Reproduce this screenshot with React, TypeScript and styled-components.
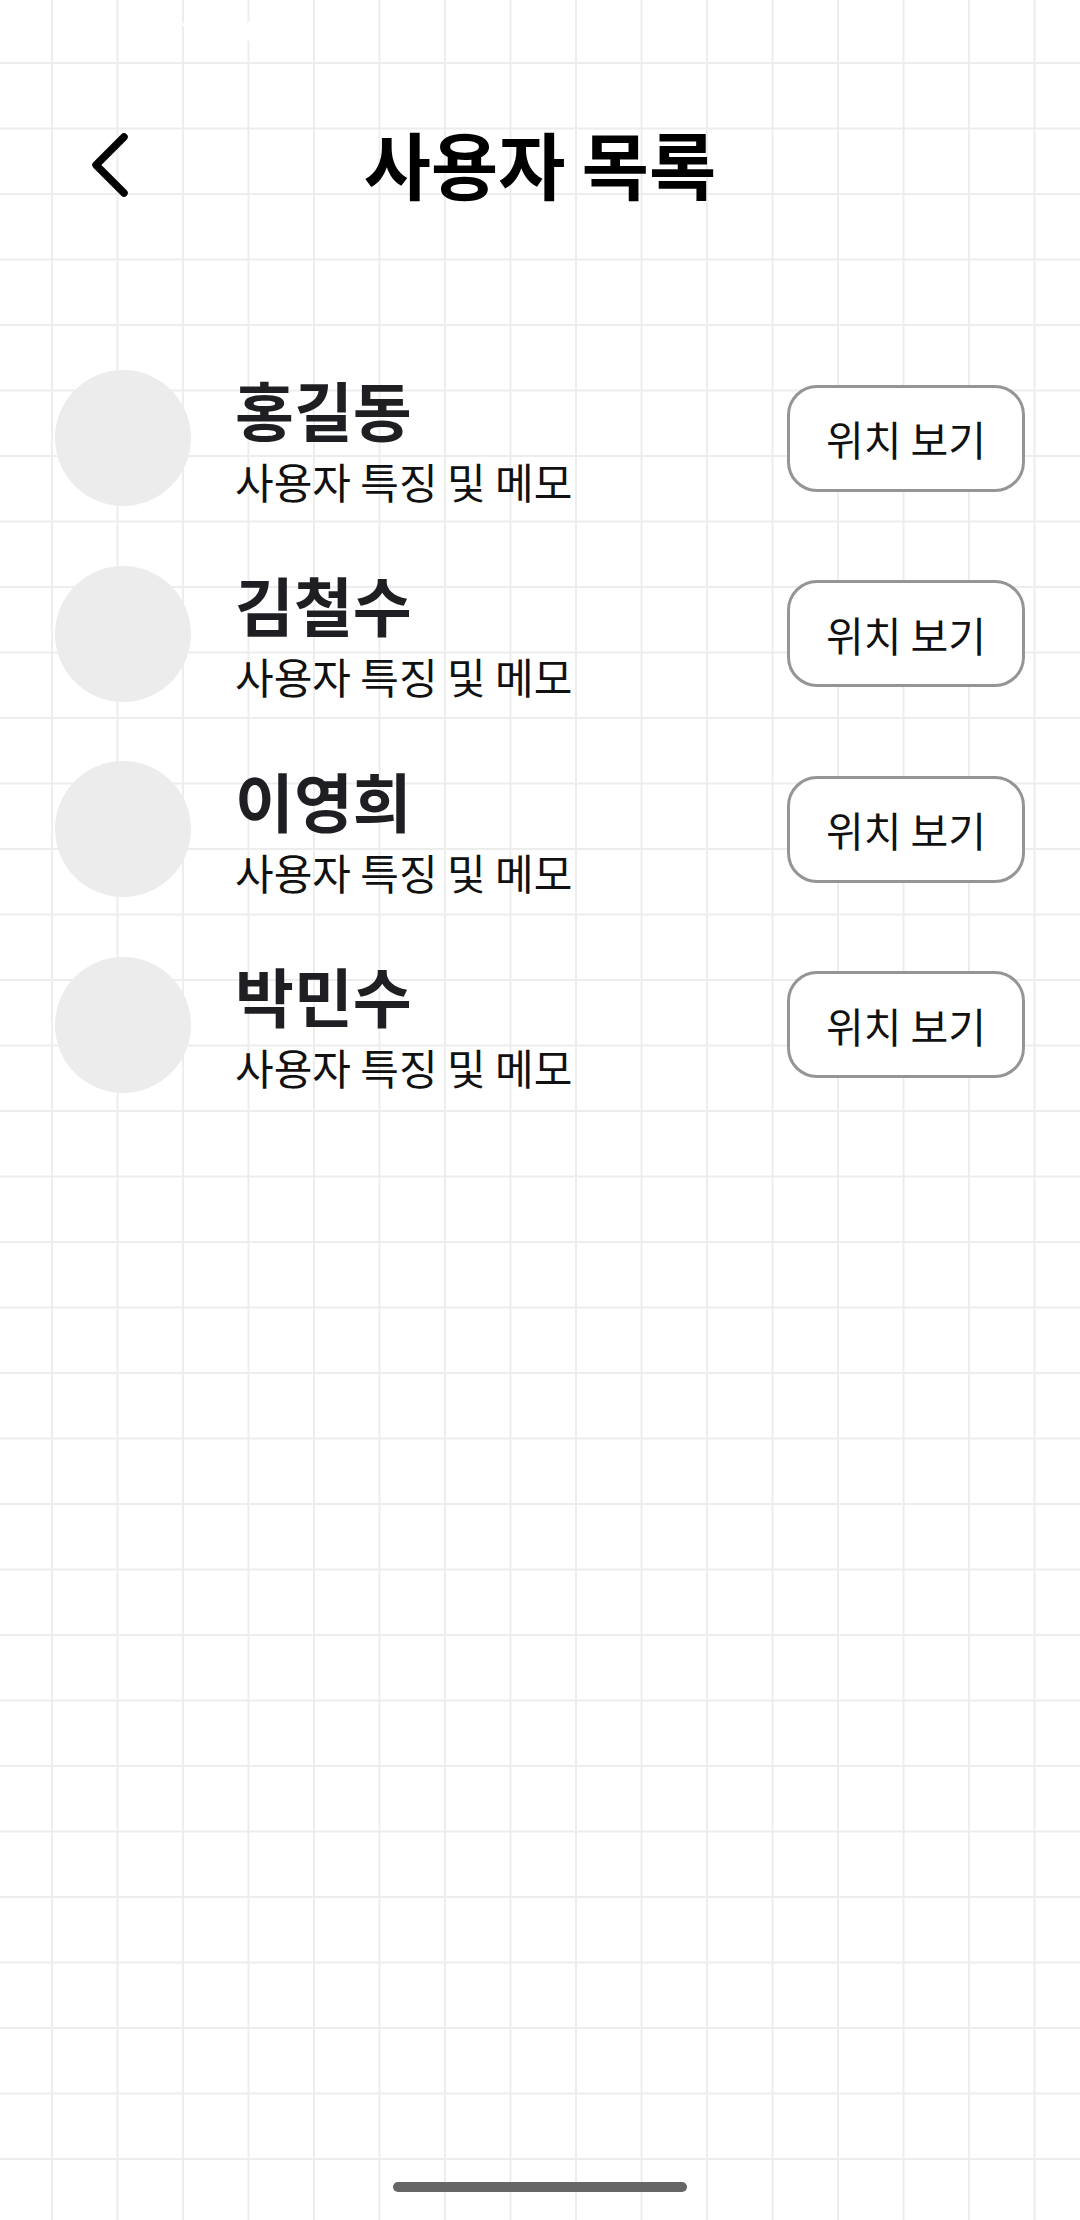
import React from "react";
import styled, { createGlobalStyle } from "styled-components";

const GlobalStyle = createGlobalStyle`
  html, body {
    margin: 0;
    padding: 0;
    background: #ffffff;
  }
  body {
    font-family: "Noto Sans CJK KR", "Noto Sans", sans-serif;
  }
  * { box-sizing: border-box; }
`;

const Page = styled.div`
  position: relative;
  width: 1080px;
  min-height: 2220px;
  display: flex;
  flex-direction: column;
  background-color: #ffffff;
  background-image:
    linear-gradient(to right, #ededed 2px, transparent 2px),
    linear-gradient(to bottom, #ededed 2px, transparent 2px);
  background-size: 65.5px 65.5px;
  background-position: 51px 62px;
`;

const StatusBar = styled.div`
  height: 62px;
  display: flex;
  justify-content: space-between;
  align-items: center;
  padding: 0 120px 0 180px;
  color: #ffffff;
  font-family: "Roboto", sans-serif;
  font-weight: 700;
  font-size: 32px;
`;

const Header = styled.header`
  height: 200px;
  display: grid;
  grid-template-columns: 1fr auto 1fr;
  align-items: center;
`;

const BackButton = styled.button`
  justify-self: start;
  margin-left: 88px;
  padding: 0;
  border: none;
  background: transparent;
  display: flex;
  cursor: pointer;
`;

const Title = styled.h1`
  margin: 0;
  font-size: 73px;
  font-weight: 700;
  color: #000000;
  line-height: 1;
  letter-spacing: 0;
`;

const List = styled.ul`
  list-style: none;
  margin: 0;
  padding: 108px 55px 0;
  display: flex;
  flex-direction: column;
  gap: 59.5px;
`;

const Row = styled.li`
  display: flex;
  align-items: center;
  height: 136px;
`;

const Avatar = styled.div`
  width: 136px;
  height: 136px;
  border-radius: 50%;
  background: #ececec;
  flex-shrink: 0;
`;

const Info = styled.div`
  flex: 1;
  display: flex;
  flex-direction: column;
  margin-left: 44px;
`;

const Name = styled.div`
  font-size: 64px;
  font-weight: 700;
  color: #1f1e22;
  line-height: 72px;
`;

const Memo = styled.div`
  margin-top: 13px;
  font-size: 42px;
  font-weight: 400;
  color: #111111;
  line-height: 48px;
`;

const LocationButton = styled.button`
  width: 238px;
  height: 107px;
  border: 3px solid #959595;
  border-radius: 30px;
  background: #ffffff;
  font-family: "Noto Sans CJK KR", "Noto Sans", sans-serif;
  font-size: 41px;
  font-weight: 400;
  color: #111111;
  display: flex;
  align-items: center;
  justify-content: center;
  padding: 0;
  cursor: pointer;
`;

const HomeArea = styled.div`
  margin-top: auto;
  display: flex;
  justify-content: center;
  padding-bottom: 28px;
`;

const HomeIndicator = styled.div`
  width: 294px;
  height: 10px;
  border-radius: 5px;
  background: #666666;
`;

const users = ["홍길동", "김철수", "이영희", "박민수"];

export default function App() {
  return (
    <>
      <GlobalStyle />
      <Page>
        <StatusBar>
          <span>12:30</span>
          <span>5G</span>
        </StatusBar>
        <Header>
          <BackButton aria-label="뒤로">
            <svg width="44" height="72" viewBox="0 0 44 72" fill="none">
              <polyline
                points="36,11 8,39 36,67"
                stroke="#000"
                strokeWidth="7.5"
                strokeLinecap="round"
                strokeLinejoin="round"
              />
            </svg>
          </BackButton>
          <Title>사용자 목록</Title>
          <div />
        </Header>
        <List>
          {users.map((u) => (
            <Row key={u}>
              <Avatar />
              <Info>
                <Name>{u}</Name>
                <Memo>사용자 특징 및 메모</Memo>
              </Info>
              <LocationButton>위치 보기</LocationButton>
            </Row>
          ))}
        </List>
        <HomeArea>
          <HomeIndicator />
        </HomeArea>
      </Page>
    </>
  );
}
